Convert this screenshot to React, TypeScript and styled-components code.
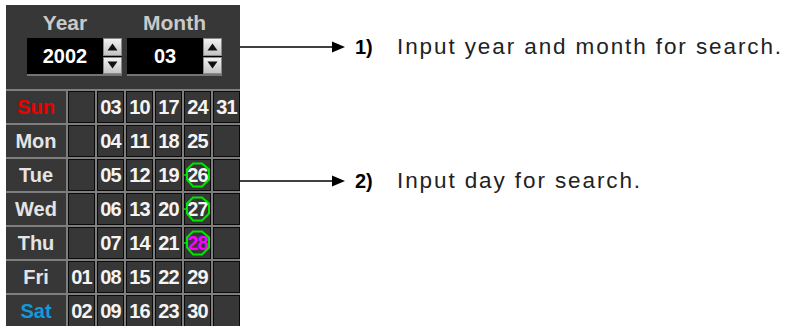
import React from 'react';
import styled, { createGlobalStyle } from 'styled-components';

const GlobalStyle = createGlobalStyle`
  html, body {
    margin: 0;
    padding: 0;
    background: #ffffff;
    overflow: hidden;
  }
  body {
    font-family: 'Liberation Sans', Arial, sans-serif;
  }
`;

const TEXTURE = `
  background-color: #343434;
  background-image: radial-gradient(circle at 1px 1px, #3a3a3a 0.6px, transparent 0.8px);
  background-size: 2px 2px;
`;

const Page = styled.div`
  display: flex;
  align-items: flex-start;
  width: 794px;
  height: 326px;
  padding: 5px 0 0 6px;
  box-sizing: border-box;
`;

const Panel = styled.div`
  width: 234px;
  flex-shrink: 0;
  ${TEXTURE}
`;

const Header = styled.div`
  height: 84px;
  display: flex;
  gap: 5px;
  padding-left: 21px;
  box-sizing: border-box;
`;

const Field = styled.div`
  width: 95px;
  display: flex;
  flex-direction: column;
`;

const FieldLabel = styled.div<{ $boxOnly?: boolean }>`
  height: 33px;
  padding-top: 2px;
  box-sizing: border-box;
  width: ${(p) => (p.$boxOnly ? '76px' : '95px')};
  display: flex;
  align-items: center;
  justify-content: center;
  font-size: 21px;
  font-weight: 700;
  color: #c9c9c9;
`;

const InputRow = styled.div`
  display: flex;
  height: 38px;
  border-bottom: 2px solid #747474;
  box-sizing: border-box;
`;

const ValueBox = styled.div`
  width: 76px;
  height: 36px;
  background: #000000;
  color: #ffffff;
  font-size: 20px;
  font-weight: 700;
  display: flex;
  align-items: center;
  justify-content: center;
`;

const Spinner = styled.div`
  width: 19px;
  height: 36px;
  display: flex;
  flex-direction: column;
  background: #000;
  gap: 1px;
`;

const SpinButton = styled.div`
  flex: 1;
  display: flex;
  align-items: center;
  justify-content: center;
  background: linear-gradient(#f2f2f2, #c4c4c4);
  border: 1px solid #8a8a8a;
  box-sizing: border-box;
`;

const Calendar = styled.div`
  display: flex;
  flex-direction: column;
`;

const WeekRow = styled.div`
  display: grid;
  grid-template-columns: 60px repeat(6, 27px);
  column-gap: 2px;
  height: 34px;
  border-top: 2px solid #7e7e7e;
  background: #7e7e7e;
  box-sizing: border-box;
`;

const DayLabel = styled.div<{ $color: string }>`
  ${TEXTURE}
  display: flex;
  align-items: center;
  justify-content: center;
  font-size: 20px;
  font-weight: 700;
  color: ${(p) => p.$color};
`;

const DayCell = styled.div<{ $color?: string }>`
  position: relative;
  ${TEXTURE}
  border: 1px solid #0a0a0a;
  box-sizing: border-box;
  display: flex;
  align-items: center;
  justify-content: center;
  font-size: 20px;
  font-weight: 700;
  letter-spacing: -0.8px;
  color: ${(p) => p.$color || '#f4f4f4'};
`;

// green selection ring drawn over a picked day
const Ring = styled.svg`
  position: absolute;
  left: -2px;
  top: 2px;
  width: 29px;
  height: 26px;
  pointer-events: none;
`;

const Notes = styled.div`
  display: flex;
  flex-direction: column;
  gap: 110px;
  padding-top: 30px;
`;

const Note = styled.div`
  display: flex;
  align-items: center;
  height: 24px;
`;

const Arrow = styled.svg`
  width: 105px;
  height: 14px;
  flex-shrink: 0;
`;

const NoteNumber = styled.span`
  margin-left: 10px;
  width: 42px;
  font-size: 20px;
  font-weight: 700;
  color: #000;
`;

const NoteText = styled.span`
  font-size: 22.5px;
  letter-spacing: 1.9px;
  color: #222;
`;

const Tri = ({ up }: { up?: boolean }) => (
  <svg width="11" height="8" viewBox="0 0 11 8">
    <polygon points={up ? '5.5,0.5 10.5,7.5 0.5,7.5' : '0.5,0.5 10.5,0.5 5.5,7.5'} fill="#111" />
  </svg>
);

const ArrowIcon = () => (
  <Arrow viewBox="0 0 105 14">
    <line x1="0" y1="7" x2="94" y2="7" stroke="#000" strokeWidth="1.6" />
    <polygon points="92,1.5 105,7 92,12.5" fill="#000" />
  </Arrow>
);

type Day = { n?: string; ring?: boolean; color?: string };

const d = (n?: string, ring?: boolean, color?: string): Day => ({ n, ring, color });

const weeks: { label: string; color: string; days: Day[] }[] = [
  { label: 'Sun', color: '#ee0000', days: [d(), d('03'), d('10'), d('17'), d('24'), d('31')] },
  { label: 'Mon', color: '#e4e4e4', days: [d(), d('04'), d('11'), d('18'), d('25'), d()] },
  { label: 'Tue', color: '#e4e4e4', days: [d(), d('05'), d('12'), d('19'), d('26', true), d()] },
  { label: 'Wed', color: '#e4e4e4', days: [d(), d('06'), d('13'), d('20'), d('27', true), d()] },
  { label: 'Thu', color: '#e4e4e4', days: [d(), d('07'), d('14'), d('21'), d('28', true, '#ff00ff'), d()] },
  { label: 'Fri', color: '#e4e4e4', days: [d('01'), d('08'), d('15'), d('22'), d('29'), d()] },
  { label: 'Sat', color: '#1199dd', days: [d('02'), d('09'), d('16'), d('23'), d('30'), d()] },
];

const App: React.FC = () => (
  <>
    <GlobalStyle />
    <Page>
      <Panel>
        <Header>
          <Field>
            <FieldLabel $boxOnly>Year</FieldLabel>
            <InputRow>
              <ValueBox>2002</ValueBox>
              <Spinner>
                <SpinButton><Tri up /></SpinButton>
                <SpinButton><Tri /></SpinButton>
              </Spinner>
            </InputRow>
          </Field>
          <Field>
            <FieldLabel>Month</FieldLabel>
            <InputRow>
              <ValueBox>03</ValueBox>
              <Spinner>
                <SpinButton><Tri up /></SpinButton>
                <SpinButton><Tri /></SpinButton>
              </Spinner>
            </InputRow>
          </Field>
        </Header>
        <Calendar>
          {weeks.map((w) => (
            <WeekRow key={w.label}>
              <DayLabel $color={w.color}>{w.label}</DayLabel>
              {w.days.map((day, i) => (
                <DayCell key={`${w.label}-${i}`} $color={day.color}>
                  {day.n}
                  {day.ring && (
                    <Ring viewBox="0 0 29 26">
                      <polygon
                        points="10,1.5 19,1.5 26,7.5 26,17.5 19,24.5 10,24.5 4,17.5 4,7.5"
                        fill="none"
                        stroke="#00e600"
                        strokeWidth="2"
                      />
                      <line x1="0.5" y1="13" x2="4" y2="13" stroke="#00e600" strokeWidth="1.5" />
                    </Ring>
                  )}
                </DayCell>
              ))}
            </WeekRow>
          ))}
        </Calendar>
      </Panel>
      <Notes>
        <Note>
          <ArrowIcon />
          <NoteNumber>1)</NoteNumber>
          <NoteText>Input year and month for search.</NoteText>
        </Note>
        <Note>
          <ArrowIcon />
          <NoteNumber>2)</NoteNumber>
          <NoteText>Input day for search.</NoteText>
        </Note>
      </Notes>
    </Page>
  </>
);

export default App;
